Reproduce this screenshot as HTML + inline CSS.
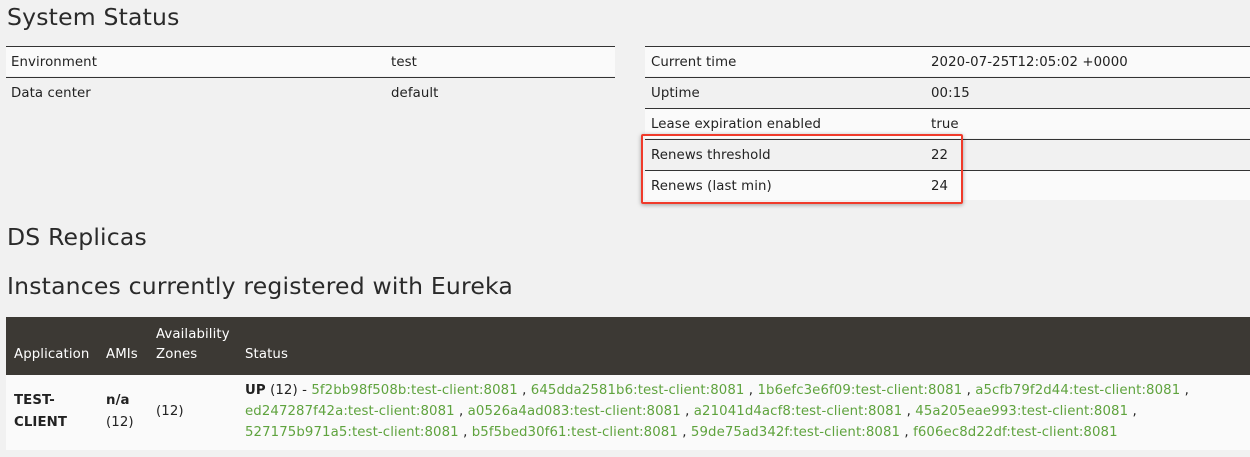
<!DOCTYPE html>
<html><head><style>
body{margin:0;background:#f1f1f1;font-family:"DejaVu Sans","Liberation Sans",sans-serif;color:#222;width:1250px;height:457px;overflow:hidden;position:relative;font-size:13.3px;letter-spacing:0.1px}
.a{position:absolute;white-space:nowrap}
h{position:absolute;font-size:23.5px;color:#2a2a2a;white-space:nowrap;left:7px;letter-spacing:0.2px}
.row{position:absolute;height:30px;border-top:1px solid #333;box-sizing:border-box}
.w{background:#fafafa}
.t{position:absolute;top:8px}
.g{color:#5fa33e}
</style></head><body>
<h style="top:3px">System Status</h>
<div class="row w" style="left:6px;top:46px;width:609px"><span class="t" style="left:5px">Environment</span><span class="t" style="left:385px">test</span></div>
<div class="row" style="left:6px;top:77px;width:609px"><span class="t" style="left:5px">Data center</span><span class="t" style="left:385px">default</span></div>

<div class="row w" style="left:645px;top:46px;width:605px"><span class="t" style="left:6px">Current time</span><span class="t" style="left:286px">2020-07-25T12:05:02 +0000</span></div>
<div class="row" style="left:645px;top:77px;width:605px"><span class="t" style="left:6px">Uptime</span><span class="t" style="left:286px">00:15</span></div>
<div class="row w" style="left:645px;top:108px;width:605px"><span class="t" style="left:6px">Lease expiration enabled</span><span class="t" style="left:286px">true</span></div>
<div class="row" style="left:645px;top:139px;width:605px"><span class="t" style="left:6px">Renews threshold</span><span class="t" style="left:286px">22</span></div>
<div class="row w" style="left:645px;top:170px;width:605px"><span class="t" style="left:6px">Renews (last min)</span><span class="t" style="left:286px">24</span></div>
<div class="a" style="left:641px;top:134px;width:318px;height:66px;border:2px solid #f03a2a;border-radius:2px;box-shadow:0 1px 4px rgba(0,0,0,.35)"></div>

<h style="top:223px">DS Replicas</h>
<h style="top:272px">Instances currently registered with Eureka</h>

<div class="a" style="left:6px;top:317px;width:1244px;height:58px;background:#3c3934;color:#fff">
<span class="a" style="left:8px;top:30px">Application</span>
<span class="a" style="left:100px;top:30px">AMIs</span>
<span class="a" style="left:150px;top:10px">Availability</span>
<span class="a" style="left:150px;top:30px">Zones</span>
<span class="a" style="left:239px;top:30px">Status</span>
</div>
<div class="a" style="left:6px;top:375px;width:1244px;height:75px;background:#fafafa">
<span class="a" style="left:8px;top:18px;font-weight:bold">TEST-</span>
<span class="a" style="left:8px;top:40px;font-weight:bold">CLIENT</span>
<span class="a" style="left:100px;top:18px;font-weight:bold">n/a</span>
<span class="a" style="left:100px;top:40px">(12)</span>
<span class="a" style="left:150px;top:29px">(12)</span>
<span class="a" style="left:239px;top:8px"><b>UP</b> (12) - <span class="g">5f2bb98f508b:test-client:8081</span> , <span class="g">645dda2581b6:test-client:8081</span> , <span class="g">1b6efc3e6f09:test-client:8081</span> , <span class="g">a5cfb79f2d44:test-client:8081</span> ,</span>
<span class="a" style="left:239px;top:29px"><span class="g">ed247287f42a:test-client:8081</span> , <span class="g">a0526a4ad083:test-client:8081</span> , <span class="g">a21041d4acf8:test-client:8081</span> , <span class="g">45a205eae993:test-client:8081</span> ,</span>
<span class="a" style="left:239px;top:50px"><span class="g">527175b971a5:test-client:8081</span> , <span class="g">b5f5bed30f61:test-client:8081</span> , <span class="g">59de75ad342f:test-client:8081</span> , <span class="g">f606ec8d22df:test-client:8081</span></span>
</div>
</body></html>
